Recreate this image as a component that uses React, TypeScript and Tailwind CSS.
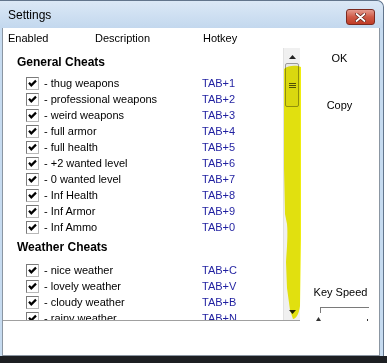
import React from 'react';

const general = [
  ['- thug weapons', 'TAB+1'],
  ['- professional weapons', 'TAB+2'],
  ['- weird weapons', 'TAB+3'],
  ['- full armor', 'TAB+4'],
  ['- full health', 'TAB+5'],
  ['- +2 wanted level', 'TAB+6'],
  ['- 0 wanted level', 'TAB+7'],
  ['- Inf Health', 'TAB+8'],
  ['- Inf Armor', 'TAB+9'],
  ['- Inf Ammo', 'TAB+0'],
];

const weather = [
  ['- nice weather', 'TAB+C'],
  ['- lovely weather', 'TAB+V'],
  ['- cloudy weather', 'TAB+B'],
  ['- rainy weather', 'TAB+N'],
];

const CheckBox: React.FC = () => (
  <div className="w-[13px] h-[13px] border border-t-[#7a7a7a] border-l-[#7a7a7a] border-b-[#b8b8b8] border-r-[#b8b8b8] bg-white flex items-center justify-center shrink-0">
    <svg width="11" height="11" viewBox="0 0 11 11">
      <polyline points="2,4.8 4.3,7.3 9,2.6" fill="none" stroke="#000" strokeWidth="2.2" />
    </svg>
  </div>
);

const CheatRow: React.FC<{ label: string; hotkey: string }> = ({ label, hotkey }) => (
  <div className="flex items-center h-[16px] pl-[23px]">
    <CheckBox />
    <span className="ml-[5px] w-[158px] whitespace-nowrap">{label}</span>
    <span className="text-[#1f1fa0] whitespace-nowrap">{hotkey}</span>
  </div>
);

const Scrollbar: React.FC = () => (
  <div className="relative w-[17px] h-full bg-[#f0f0f0] border-l border-[#e2e2e2] flex flex-col">
    {/* up arrow */}
    <div className="h-[17px] flex items-center justify-center">
      <svg width="7" height="4" viewBox="0 0 7 4">
        <polygon points="3.5,0 7,4 0,4" fill="#222" />
      </svg>
    </div>
    {/* thumb */}
    <div className="mx-[1px] mt-[-2px] h-[44px] rounded-[2px] border border-[#9a9a9a] bg-[#e8e8e8] flex flex-col items-center justify-center gap-[1px]">
      <div className="w-[7px] h-[1px] bg-[#555]" />
      <div className="w-[7px] h-[1px] bg-[#555]" />
      <div className="w-[7px] h-[1px] bg-[#555]" />
    </div>
    <div className="flex-1" />
    {/* down arrow */}
    <div className="h-[17px] flex items-center justify-center">
      <svg width="7" height="4" viewBox="0 0 7 4">
        <polygon points="0,0 7,0 3.5,4" fill="#222" />
      </svg>
    </div>
    {/* yellow highlighter stroke */}
    <svg
      className="absolute left-0 top-0 mix-blend-multiply pointer-events-none"
      width="17"
      height="272"
      viewBox="0 0 17 272"
    >
      <path
        d="M0,21 C4,17 13,17 17,19 L17,190 L16,258 C15,266 12,271 9,271 L6,262 L3,240 L2,214 C3,200 4,186 3,176 L1,166 L0,120 Z"
        fill="#f0ee10"
      />
    </svg>
  </div>
);

export default function App() {
  return (
    <div
      className="w-[387px] h-[363px] bg-white overflow-hidden flex flex-col text-[11px] text-black"
      style={{ fontFamily: '"Liberation Sans", Arial, sans-serif' }}
    >
      {/* window */}
      <div className="w-[384px] h-[356px] shrink-0 rounded-tr-[7px] border-t border-r border-[#62758c] bg-[#c6dbf0] flex flex-col">
        {/* title bar */}
        <div className="h-[27px] shrink-0 flex items-center justify-between pl-[8px] pr-[8px] rounded-tr-[7px] bg-gradient-to-b from-[#dbe8f6] to-[#c3d8ee]">
          <span className="text-[12px] text-black">Settings</span>
          <div className="w-[29px] h-[16px] mt-[5px] rounded-[3px] border border-[#7b2a20] bg-gradient-to-b from-[#e49a8e] via-[#cf5a46] to-[#c03c26] flex items-center justify-center">
            <svg width="11" height="9" viewBox="0 0 11 9">
              <path d="M1.5,1 L9.5,8 M9.5,1 L1.5,8" stroke="#5a1a12" strokeWidth="3.2" strokeLinecap="round" />
              <path d="M1.5,1 L9.5,8 M9.5,1 L1.5,8" stroke="#fff" strokeWidth="1.8" strokeLinecap="round" />
            </svg>
          </div>
        </div>

        {/* client area */}
        <div className="ml-[2px] w-[378px] flex-1 bg-white border-l border-r border-b border-[#8b96a2] flex flex-col">
          {/* column headings */}
          <div className="h-[20px] shrink-0 flex items-center">
            <span className="ml-[5px] w-[87px]">Enabled</span>
            <span className="w-[108px]">Description</span>
            <span>Hotkey</span>
          </div>

          <div className="flex h-[273px] shrink-0">
            {/* cheats list */}
            <div className="w-[297px] h-[273px] border-b border-[#a0a0a0] flex">
              <div className="w-[280px] h-[272px] overflow-hidden">
                <div className="mt-[6px] h-[16px] pl-[14px] flex items-center text-[12px] font-bold">General Cheats</div>
                <div className="mt-[5px]">
                  {general.map(([l, h]) => (
                    <CheatRow key={l} label={l} hotkey={h} />
                  ))}
                </div>
                <div className="mt-[4px] h-[16px] pl-[14px] flex items-center text-[12px] font-bold">Weather Cheats</div>
                <div className="mt-[7px]">
                  {weather.map(([l, h]) => (
                    <CheatRow key={l} label={l} hotkey={h} />
                  ))}
                </div>
              </div>
              <Scrollbar />
            </div>

            {/* buttons */}
            <div className="flex-1 flex flex-col items-center">
              <div className="mt-[2px] h-[16px] flex items-center">OK</div>
              <div className="mt-[31px] h-[16px] flex items-center">Copy</div>
              <div className="mt-[171px] h-[16px] flex items-center pl-[2px]">Key Speed</div>
              <div className="mt-[7px] self-start ml-[20px] w-[49px] h-[15px] border-t border-l border-[#7a7a7a]" />
              <div className="self-start ml-[16px] mt-[4px] w-[52px] flex justify-between items-end">
                <svg width="5" height="4" viewBox="0 0 5 4">
                  <polygon points="2.5,0 5,4 0,4" fill="#333" />
                </svg>
                <div className="w-[1px] h-[2px] bg-[#333]" />
              </div>
            </div>
          </div>
        </div>
      </div>
      {/* desktop behind */}
      <div className="flex-1 bg-[#1d1f22]" />
    </div>
  );
}
